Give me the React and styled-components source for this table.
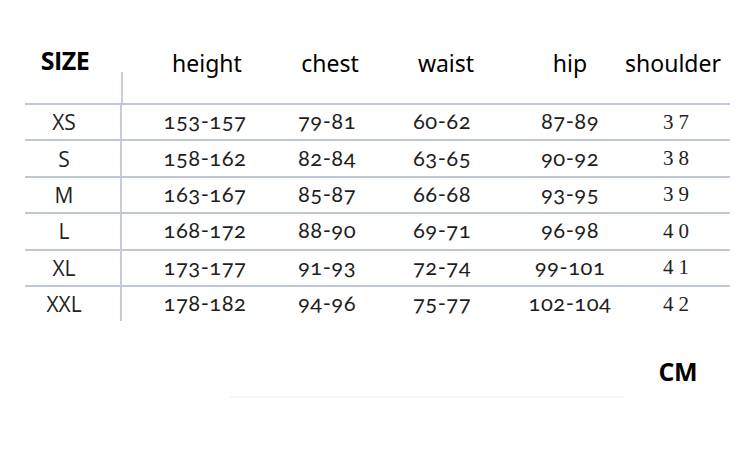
import styled, { createGlobalStyle } from "styled-components";

const GlobalStyle = createGlobalStyle`
  html, body {
    margin: 0;
    padding: 0;
    background: #ffffff;
  }
`;

const columns = "97px 166px 78px 152px 104px 108px";

const headers = [
  { label: "height", shift: 4 },
  { label: "chest", shift: 6 },
  { label: "waist", shift: 8 },
  { label: "hip", shift: 0 },
  { label: "shoulder", shift: -6 },
];

const rows = [
  ["XS", "153-157", "79-81", "60-62", "87-89", "37"],
  ["S", "158-162", "82-84", "63-65", "90-92", "38"],
  ["M", "163-167", "85-87", "66-68", "93-95", "39"],
  ["L", "168-172", "88-90", "69-71", "96-98", "40"],
  ["XL", "173-177", "91-93", "72-74", "99-101", "41"],
  ["XXL", "178-182", "94-96", "75-77", "102-104", "42"],
];

const App = () => {
  return (
    <Page>
      <GlobalStyle />
      <Table>
        <HeaderRow>
          <SizeHead>SIZE</SizeHead>
          {headers.map((h) => (
            <HeadCell key={h.label} $shift={h.shift}>
              {h.label}
            </HeadCell>
          ))}
        </HeaderRow>
        {rows.map((r) => (
          <Row key={r[0]}>
            <SizeCell>{r[0]}</SizeCell>
            <NumCell>{r[1]}</NumCell>
            <NumCell>{r[2]}</NumCell>
            <NumCell>{r[3]}</NumCell>
            <NumCell>{r[4]}</NumCell>
            <ShoulderCell>{r[5]}</ShoulderCell>
          </Row>
        ))}
      </Table>
      <Footer>
        <Unit>CM</Unit>
      </Footer>
      <FaintRule />
    </Page>
  );
};

const Page = styled.div`
  width: 750px;
  height: 451px;
  padding: 40px 0 0 25px;
  box-sizing: border-box;
  background: #ffffff;
  color: #1c1c1c;
  font-family: "Open Sans", "Noto Sans", sans-serif;
  overflow: hidden;
`;

const Table = styled.div`
  width: 705px;
  display: flex;
  flex-direction: column;
`;

const HeaderRow = styled.div`
  display: grid;
  grid-template-columns: ${columns};
  height: 63px;
  align-items: center;
  padding-bottom: 18px;
  box-sizing: border-box;
  background: linear-gradient(#c6cdda, #c6cdda) 96px bottom / 2px 31px no-repeat;
`;

const SizeHead = styled.div`
  font-family: "Open Sans", "Noto Sans", sans-serif;
  font-weight: 700;
  font-size: 25px;
  color: #000;
  text-align: center;
  padding-right: 17px;
  margin-top: -5px;
  letter-spacing: -0.5px;
`;

const HeadCell = styled.div`
  font-family: "Noto Sans", "Open Sans", sans-serif;
  font-size: 23px;
  color: #000;
  text-align: center;
  padding-left: ${(p) => (p.$shift > 0 ? p.$shift : 0)}px;
  padding-right: ${(p) => (p.$shift < 0 ? -p.$shift : 0)}px;
  white-space: nowrap;
`;

const Row = styled.div`
  display: grid;
  grid-template-columns: ${columns};
  height: 36.4px;
  align-items: center;
  border-top: 2px solid #bfc7d6;
  box-sizing: border-box;
`;

const SizeCell = styled.div`
  height: 100%;
  display: flex;
  align-items: center;
  justify-content: center;
  padding-right: 17px;
  border-right: 2px solid #c6cdda;
  font-family: "Open Sans", "Noto Sans", sans-serif;
  font-size: 21px;
  color: #222;
  box-sizing: border-box;
`;

const NumCell = styled.div`
  text-align: center;
  font-family: Lato, "Open Sans", sans-serif;
  font-variant-numeric: oldstyle-nums;
  font-size: 22px;
  color: #1e1e1e;
  letter-spacing: 0.5px;
  white-space: nowrap;
  margin-top: -3px;
`;

const ShoulderCell = styled.div`
  text-align: center;
  font-family: "Liberation Serif", "DejaVu Serif", serif;
  font-size: 21px;
  color: #222;
  letter-spacing: 5px;
  padding-left: 5px;
`;

const Footer = styled.div`
  display: flex;
  justify-content: flex-end;
  padding-right: 53px;
  margin-top: 33px;
`;

const Unit = styled.div`
  font-family: "Open Sans", "Noto Sans", sans-serif;
  font-weight: 700;
  font-size: 25px;
  color: #000;
  letter-spacing: -0.5px;
`;

const FaintRule = styled.div`
  width: 395px;
  height: 2px;
  margin: 8px 0 0 205px;
  background: #f6f7f9;
`;

export default App;
